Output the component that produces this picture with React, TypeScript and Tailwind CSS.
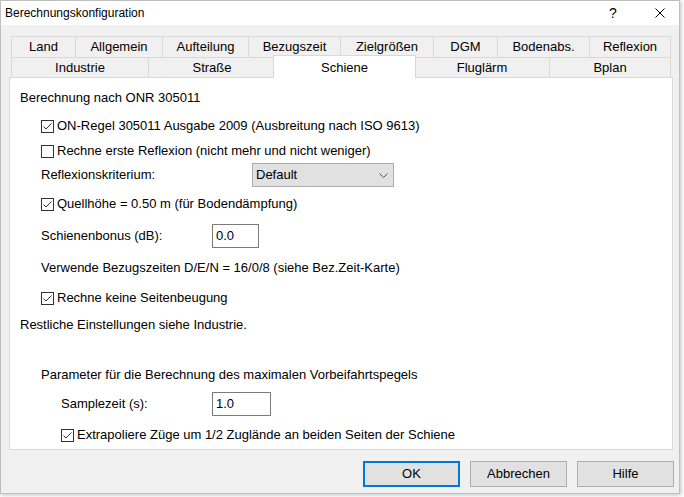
import React from 'react';

type Tab = { label: string; w: number; active?: boolean };

const topTabs: Tab[] = [
  { label: 'Land', w: 64 },
  { label: 'Allgemein', w: 87 },
  { label: 'Aufteilung', w: 86 },
  { label: 'Bezugszeit', w: 92 },
  { label: 'Zielgrößen', w: 93 },
  { label: 'DGM', w: 64 },
  { label: 'Bodenabs.', w: 92 },
  { label: 'Reflexion', w: 82 },
];

const bottomTabs: Tab[] = [
  { label: 'Industrie', w: 137 },
  { label: 'Straße', w: 127 },
  { label: 'Schiene', w: 139, active: true },
  { label: 'Fluglärm', w: 135 },
  { label: 'Bplan', w: 122 },
];

const CheckBox = ({ checked }: { checked: boolean }) => (
  <span className="w-[13px] h-[13px] border border-[#333333] bg-white flex items-center justify-center shrink-0">
    {checked && (
      <svg width="11" height="11" viewBox="0 0 11 11">
        <polyline points="1.5,5.5 4,8 9.5,2.5" fill="none" stroke="#333333" strokeWidth="1" />
      </svg>
    )}
  </span>
);

const CheckRow = ({ label, checked, indent }: { label: string; checked: boolean; indent: string }) => (
  <div className={`flex items-center h-[24px] ${indent}`}>
    <CheckBox checked={checked} />
    <span className="ml-[3px]">{label}</span>
  </div>
);

const TabRow = ({ tabs, height }: { tabs: Tab[]; height: string }) => (
  <div className={`flex items-start ${height}`}>
    {tabs.map((t, i) =>
      t.active ? (
        <div
          key={t.label}
          className="relative z-10 -mt-[2px] -mx-[2px] h-[23px] bg-white border-l border-r border-t border-[#d9d9d9] flex justify-center pt-[2px]"
          style={{ width: t.w + 4 }}
        >
          {t.label}
        </div>
      ) : (
        <div
          key={t.label}
          className={`h-full border-l border-t border-[#d9d9d9] flex items-center justify-center ${i === tabs.length - 1 ? 'border-r' : ''}`}
          style={{ width: t.w }}
        >
          {t.label}
        </div>
      )
    )}
  </div>
);

const Button = ({ label, focused }: { label: string; focused?: boolean }) => (
  <div
    className={`w-[97px] h-[26px] bg-[#e1e1e1] flex items-center justify-center ${
      focused ? 'border-2 border-[#0078d7]' : 'border border-[#adadad]'
    }`}
  >
    {label}
  </div>
);

export default function App() {
  return (
    <div className="w-[684px] h-[497px] bg-white overflow-hidden text-[13px] text-black font-['Liberation_Sans',Arial,sans-serif]">
      <div className="w-[680px] h-[494px] bg-[#f0f0f0] border border-[#bfbfbf] shadow-[1px_1px_4px_rgba(0,0,0,0.25)] flex flex-col">
        {/* title bar */}
        <div className="h-[24px] bg-white flex items-center pl-[4px] text-[12px]">
          <span className="flex-1">Berechnungskonfiguration</span>
          <span className="text-[14px] w-[8px] mr-[38px]">?</span>
          <svg width="10" height="10" viewBox="0 0 10 10" className="mr-[14px]">
            <path d="M0.5 0.5 L9.5 9.5 M9.5 0.5 L0.5 9.5" stroke="#000" strokeWidth="1" />
          </svg>
        </div>

        {/* tabs */}
        <div className="pt-[11px] pl-[10px]">
          <TabRow tabs={topTabs} height="h-[21px]" />
          <TabRow tabs={bottomTabs} height="h-[20px]" />
        </div>

        {/* page */}
        <div className="ml-[8px] w-[664px] h-[373px] bg-white border border-[#d9d9d9] flex flex-col pt-[8px] pl-[10px]">
          <div className="h-[24px] flex items-center">Berechnung nach ONR 305011</div>
          <div className="mt-[4px]">
            <CheckRow checked label="ON-Regel 305011 Ausgabe 2009 (Ausbreitung nach ISO 9613)" indent="pl-[21px]" />
          </div>
          <div className="mt-[1px]">
            <CheckRow checked={false} label="Rechne erste Reflexion (nicht mehr und nicht weniger)" indent="pl-[21px]" />
          </div>
          <div className="h-[24px] flex items-center pl-[21px]">
            <span className="w-[211px]">Reflexionskriterium:</span>
            <div className="w-[142px] h-[24px] bg-[#e1e1e1] border border-[#adadad] flex items-center pl-[3px] pr-[5px]">
              <span className="flex-1">Default</span>
              <svg width="9" height="5" viewBox="0 0 9 5">
                <polyline points="0.5,0.5 4.5,4.5 8.5,0.5" fill="none" stroke="#555" strokeWidth="1" />
              </svg>
            </div>
          </div>
          <div className="mt-[5px]">
            <CheckRow checked label="Quellhöhe = 0.50 m (für Bodendämpfung)" indent="pl-[21px]" />
          </div>
          <div className="mt-[8px] h-[24px] flex items-center pl-[21px]">
            <span className="w-[171px]">Schienenbonus (dB):</span>
            <div className="w-[47px] h-[24px] border border-[#7a7a7a] flex items-center pl-[3px]">0.0</div>
          </div>
          <div className="mt-[8px] h-[24px] flex items-center pl-[21px]">
            Verwende Bezugszeiten D/E/N = 16/0/8 (siehe Bez.Zeit-Karte)
          </div>
          <div className="mt-[6px]">
            <CheckRow checked label="Rechne keine Seitenbeugung" indent="pl-[21px]" />
          </div>
          <div className="mt-[3px] h-[24px] flex items-center">Restliche Einstellungen siehe Industrie.</div>
          <div className="mt-[26px] h-[24px] flex items-center pl-[21px]">
            Parameter für die Berechnung des maximalen Vorbeifahrtspegels
          </div>
          <div className="mt-[5px] h-[24px] flex items-center pl-[41px]">
            <span className="w-[151px]">Samplezeit (s):</span>
            <div className="w-[59px] h-[24px] border border-[#7a7a7a] flex items-center pl-[3px]">1.0</div>
          </div>
          <div className="mt-[7px]">
            <CheckRow checked label="Extrapoliere Züge um 1/2 Zuglände an beiden Seiten der Schiene" indent="pl-[41px]" />
          </div>
        </div>

        {/* buttons */}
        <div className="mt-[11px] flex justify-end gap-[10px] pr-[5px]">
          <Button label="OK" focused />
          <Button label="Abbrechen" />
          <Button label="Hilfe" />
        </div>
      </div>
    </div>
  );
}
